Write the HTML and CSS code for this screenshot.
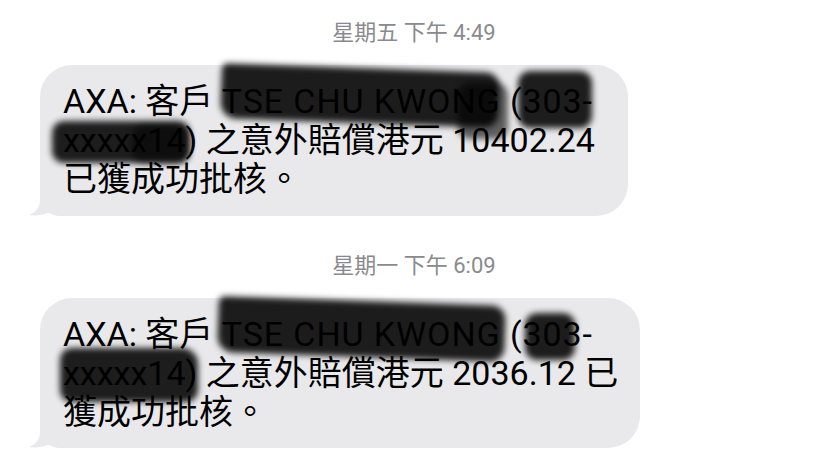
FILE: index.html
```
<!DOCTYPE html>
<html>

<head>
	<title>訊息</title>
	<meta charset="utf-8">
	<link rel="stylesheet" href="styles.css">
</head>

<body>
	<div class="thread">
		<p class="stamp">星期五 下午 4:49</p>
		<div class="row">
			<div class="bubble first">
				<span class="line">AXA: 客戶 <span class="name">TSE CHU KWONG (303-</span></span>
				<span class="line">xxxxx14) 之意外賠償港元 10402.24</span>
				<span class="line">已獲成功批核。</span>
				<div class="ink a1"></div>
				<div class="ink a2"></div>
				<div class="ink a3"></div>
				<div class="ink a4"></div>
				<div class="ink a5"></div>
				<svg class="tail" width="40" height="30" viewBox="0 0 40 30">
					<path d="M12 0 V14 C12 21 8 26 1 29 C10 30.5 19 28 26 24 C22 20 21 14 21 0 Z" fill="#e9e9eb" />
				</svg>
			</div>
		</div>

		<p class="stamp second">星期一 下午 6:09</p>
		<div class="row">
			<div class="bubble last">
				<span class="line">AXA: 客戶 <span class="name">TSE CHU KWONG (303-</span></span>
				<span class="line">xxxxx14) 之意外賠償港元 2036.12 已</span>
				<span class="line">獲成功批核。</span>
				<div class="ink b1"></div>
				<div class="ink b2"></div>
				<div class="ink b3"></div>
				<svg class="tail" width="40" height="30" viewBox="0 0 40 30">
					<path d="M12 0 V14 C12 21 8 26 1 29 C10 30.5 19 28 26 24 C22 20 21 14 21 0 Z" fill="#e9e9eb" />
				</svg>
			</div>
		</div>
	</div>
</body>

</html>
```

FILE: styles.css
```
* {
	margin: 0;
	box-sizing: border-box;
}

body {
	background-color: #ffffff;
	font-family: Roboto, "Noto Sans CJK TC", sans-serif;
	color: #000000;
}

.thread {
	padding-top: 20px;
}

.stamp {
	text-align: center;
	color: #8a8a8e;
	font-size: 22px;
	line-height: 26px;
}

.stamp.second {
	margin-top: 37px;
}

.row {
	padding-left: 40px;
	margin-top: 19px;
}

.bubble {
	position: relative;
	background-color: #e9e9eb;
	border-radius: 32px 32px 32px 20px;
	padding: 17px 0 16px 23px;
	font-size: 34px;
	line-height: 39px;
}

.bubble.first {
	width: 588px;
	height: 151px;
}

.bubble.last {
	width: 600px;
	height: 150px;
}

.line {
	display: block;
	white-space: nowrap;
}

.name {
	letter-spacing: 0.9px;
}

.tail {
	position: absolute;
	left: -12px;
	bottom: 0;
}

/* hand-drawn marker blobs over the name and policy number */
.ink {
	position: absolute;
	background-color: rgba(0, 0, 0, 0.88);
	filter: blur(3px);
	border-radius: 12px;
}

.a1 {
	left: 181px;
	top: 3px;
	width: 278px;
	height: 55px;
	transform: rotate(2deg);
	border-radius: 6px 14px 14px 16px;
}

.a2 {
	left: 418px;
	top: 18px;
	width: 50px;
	height: 56px;
	background-color: rgba(0, 0, 0, 0.6);
}

.a3 {
	left: 478px;
	top: 6px;
	width: 74px;
	height: 57px;
}

.a4 {
	left: 12px;
	top: 56px;
	width: 138px;
	height: 42px;
}

.a5 {
	left: 92px;
	top: 60px;
	width: 56px;
	height: 38px;
	background-color: rgba(0, 0, 0, 0.5);
}

.b1 {
	left: 178px;
	top: 3px;
	width: 287px;
	height: 56px;
	transform: rotate(2deg);
	border-radius: 6px 14px 14px 16px;
}

.b2 {
	left: 485px;
	top: 15px;
	width: 50px;
	height: 47px;
}

.b3 {
	left: 20px;
	top: 50px;
	width: 138px;
	height: 54px;
	border-radius: 12px 16px 12px 12px;
}
```
